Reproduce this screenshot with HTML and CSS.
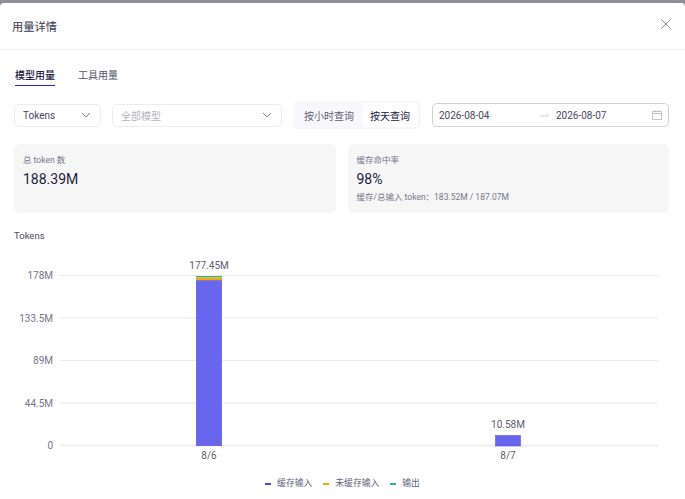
FILE: index.html
```html
<!DOCTYPE html>
<html lang="zh-CN">

<head>
    <meta charset="UTF-8">
    <meta name="viewport" content="width=device-width, initial-scale=1.0">
    <title>用量详情</title>

    <link rel="stylesheet" href="styles.css">
</head>

<body>
    <div class="modal">
        <div class="modal-header">
            <h2 class="modal-title">用量详情</h2>
            <svg class="close-icon" width="10" height="10" viewBox="0 0 10 10">
                <path d="M0.5 0.5L9.5 9.5M9.5 0.5L0.5 9.5" />
            </svg>
        </div>

        <div class="modal-body">
            <div class="tabs">
                <a class="tab tab-active">模型用量</a>
                <a class="tab">工具用量</a>
            </div>

            <div class="filters">
                <div class="select select-unit">
                    <span>Tokens</span>
                    <svg class="chevron" width="10" height="6" viewBox="0 0 10 6">
                        <path d="M1 1L5 5L9 1" />
                    </svg>
                </div>
                <div class="select select-model">
                    <span class="placeholder">全部模型</span>
                    <svg class="chevron" width="10" height="6" viewBox="0 0 10 6">
                        <path d="M1 1L5 5L9 1" />
                    </svg>
                </div>
                <div class="segment">
                    <span class="segment-item segment-hour">按小时查询</span>
                    <span class="segment-item segment-active">按天查询</span>
                </div>
                <div class="date-range">
                    <span class="date">2026-08-04</span>
                    <svg class="date-arrow" width="9" height="6" viewBox="0 0 9 6">
                        <path d="M0 4H8.5M6 1.5L8.5 4" />
                    </svg>
                    <span class="date">2026-08-07</span>
                    <svg class="calendar" width="10" height="10" viewBox="0 0 10 10">
                        <path d="M0.5 1.5H9.5V9.5H0.5ZM0.5 3.5H9.5M2.8 0V2M7.2 0V2" />
                    </svg>
                </div>
            </div>

            <div class="stats">
                <div class="stat-card">
                    <div class="stat-label">总 token 数</div>
                    <div class="stat-value">188.39M</div>
                </div>
                <div class="stat-card">
                    <div class="stat-label">缓存命中率</div>
                    <div class="stat-value">98%</div>
                    <div class="stat-note">缓存/总输入 token：183.52M / 187.07M</div>
                </div>
            </div>

            <div class="chart-title">Tokens</div>

            <svg class="chart" width="685" height="220" viewBox="0 0 685 220">
                <g class="grid">
                    <path d="M60 33.5H658" />
                    <path d="M60 76H658" />
                    <path d="M60 118.5H658" />
                    <path d="M60 161H658" />
                    <path class="grid-base" d="M60 203.5H658" />
                </g>
                <g class="y-labels">
                    <text x="53" y="37">178M</text>
                    <text x="53" y="79.5">133.5M</text>
                    <text x="53" y="122">89M</text>
                    <text x="53" y="164.5">44.5M</text>
                    <text x="53" y="207">0</text>
                </g>
                <rect x="196" y="34" width="26" height="1.5" fill="#36b37e" />
                <rect x="196" y="35.5" width="26" height="3.2" fill="#f5a90f" />
                <rect class="bar" x="196.3" y="38.7" width="25.4" height="165" />
                <rect class="bar" x="495.5" y="193.5" width="25" height="10.5" />
                <g class="bar-labels">
                    <text x="209" y="26.5">177.45M</text>
                    <text x="508" y="186">10.58M</text>
                    <text x="209" y="217">8/6</text>
                    <text x="508" y="217">8/7</text>
                </g>
            </svg>

            <div class="legend">
                <span class="legend-item"><i class="legend-mark mark-cache"></i>缓存输入</span>
                <span class="legend-item"><i class="legend-mark mark-nocache"></i>未缓存输入</span>
                <span class="legend-item"><i class="legend-mark mark-output"></i>输出</span>
            </div>
        </div>
    </div>
</body>

</html>
```

FILE: styles.css
```css
* {
    box-sizing: border-box;
}

html,
body {
    height: 100%;
}

body {
    margin: 0;
    overflow: hidden;
    background: #8f8e99;
    color: #23213f;
    font-family: Roboto, "Noto Sans CJK SC", sans-serif;
    font-size: 11px;
}

.modal {
    height: 496px;
    margin-top: 3px;
    background: #fff;
    border-radius: 4px 4px 0 0;
    overflow: hidden;
}

.modal-header {
    display: flex;
    align-items: center;
    justify-content: space-between;
    height: 47px;
    padding: 0 14px 0 12px;
    border-bottom: 1px solid #efeff2;
}

.modal-title {
    margin: 0;
    font-size: 11.25px;
    font-weight: 400;
    color: #3a3850;
}

.close-icon {
    margin-bottom: 4px;
}

.close-icon path {
    fill: none;
    stroke: #8f8e9a;
}

.modal-body {
    padding: 0 0 0 14px;
}

.tabs {
    display: flex;
    gap: 23px;
    height: 36px;
    padding: 18px 0 0 1px;
}

.tab {
    height: 18px;
    font-size: 10px;
    line-height: 15px;
    color: #55536a;
}

.tab-active {
    border-bottom: 1px solid #2a25c9;
    color: #23213f;
    font-weight: 500;
}

.filters {
    display: flex;
    align-items: center;
    height: 24px;
    margin-top: 17px;
}

.select {
    display: flex;
    align-items: center;
    justify-content: space-between;
    height: 23px;
    padding: 0 9px 0 8px;
    border: 1px solid #ebebf0;
    border-radius: 5px;
    font-size: 10px;
    color: #4a4860;
}

.select-unit {
    width: 87px;
    margin-right: 11px;
}

.select-model {
    width: 170px;
    margin-right: 11px;
}

.placeholder {
    color: #b5b4bd;
}

.chevron path {
    fill: none;
    stroke: #85848f;
}

.segment {
    display: flex;
    height: 28px;
    padding: 2px 3px;
    margin-right: 11px;
    border-radius: 5px;
    background: #f8f8fc;
    font-size: 10px;
}

.segment-item {
    display: flex;
    align-items: center;
    justify-content: center;
    width: 56px;
    color: #5f5d72;
}

.segment-hour {
    width: 66px;
}

.segment-active {
    background: #fff;
    border-radius: 4px;
    color: #23213f;
}

.date-range {
    display: flex;
    align-items: center;
    width: 237px;
    height: 24px;
    padding: 0 6px;
    border: 1px solid #cfcfd8;
    border-radius: 5px;
    font-size: 10px;
    color: #4a4860;
}

.date {
    width: 101px;
}

.date-arrow {
    margin-right: 7px;
}

.date-arrow path {
    fill: none;
    stroke: #cfcfd6;
}

.date-arrow + .date {
    width: 90px;
}

.calendar {
    margin-left: auto;
}

.calendar path {
    fill: none;
    stroke: #c4c3cc;
}

.stats {
    display: grid;
    grid-template-columns: 322px 321.5px;
    gap: 11.5px;
    height: 68px;
    margin-top: 17px;
}

.stat-card {
    padding: 9px 9px;
    border-radius: 6px;
    background: #f6f6f7;
}

.stat-label {
    font-size: 8.5px;
    line-height: 14px;
    color: #77758a;
}

.stat-value {
    margin-top: 1px;
    font-size: 14px;
    line-height: 22px;
    color: #1f1c42;
}

.stat-note {
    font-size: 8.5px;
    line-height: 14px;
    color: #77758a;
}

.chart-title {
    margin-top: 17px;
    font-size: 9.5px;
    line-height: 13px;
    color: #4a4860;
}

.chart {
    display: block;
    margin: 0 0 0 -14px;
}

.grid path {
    fill: none;
    stroke: #e9e9f0;
}

.grid .grid-base {
    stroke-width: 2px;
    stroke: #eeeef4;
}

.bar {
    fill: #6966ee;
    stroke: #5a55f0;
    stroke-width: 0.6px;
}

.chart text {
    font-size: 10px;
    fill: #5f5d72;
}

.y-labels text {
    text-anchor: end;
    fill: #77758a;
}

.bar-labels text {
    text-anchor: middle;
}

.legend {
    display: flex;
    justify-content: center;
    gap: 11px;
    margin: 15px 0 0 -14px;
    font-size: 8.8px;
    line-height: 13px;
    color: #66647a;
}

.legend-item {
    display: flex;
    align-items: center;
}

.legend-mark {
    width: 6px;
    height: 2px;
    margin-right: 6px;
}

.mark-cache {
    background: #4f46e5;
}

.mark-nocache {
    background: #f5a90f;
}

.mark-output {
    background: #36b37e;
}
```
